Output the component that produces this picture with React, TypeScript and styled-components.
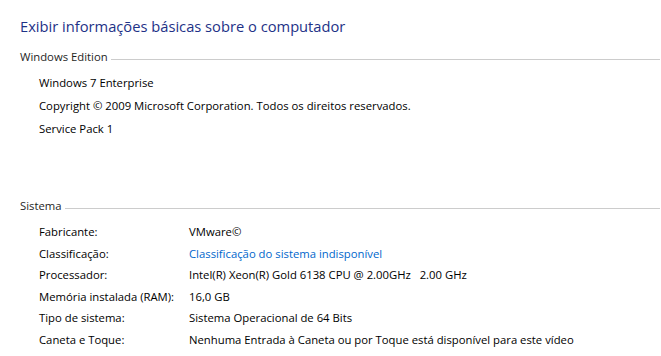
import React from "react";
import styled, { createGlobalStyle } from "styled-components";

const Global = createGlobalStyle`
  html, body { margin: 0; padding: 0; background: #ffffff; }
  body { font-family: "Open Sans", "Noto Sans", sans-serif; color: #000; }
`;

const Page = styled.div`
  width: 661px;
  height: 356px;
  overflow: hidden;
  background: #fff;
  padding: 15px 1px 0 20px;
  box-sizing: border-box;
`;

const Title = styled.h1`
  margin: 0;
  font-family: "Open Sans", sans-serif;
  font-weight: 400;
  font-size: 14.7px;
  line-height: 22px;
  color: #1e3287;
  white-space: nowrap;
`;

const Section = styled.section<{ $top: number }>`
  margin-top: ${(p) => p.$top}px;
`;

const Header = styled.div`
  display: flex;
  align-items: flex-start;
  font-size: 11.3px;
  line-height: 16px;
  color: #1e1e1e;
  white-space: nowrap;
  &::after {
    content: "";
    flex: 1;
    height: 1px;
    background: #cccccc;
    margin: 9.5px 0 0 3px;
  }
`;

const Rows = styled.div<{ $row: number; $gap: number }>`
  display: grid;
  grid-template-columns: 150px auto;
  grid-auto-rows: ${(p) => p.$row}px;
  padding-left: 19px;
  margin-top: ${(p) => p.$gap}px;
  font-size: 11.3px;
  line-height: ${(p) => p.$row}px;
  white-space: nowrap;
`;

const Line = styled.div`
  grid-column: 1 / -1;
`;

const Label = styled.div``;

const Value = styled.div<{ $link?: boolean }>`
  color: ${(p) => (p.$link ? "#0066cc" : "#000")};
`;

const edition = [
  "Windows 7 Enterprise",
  "Copyright © 2009 Microsoft Corporation. Todos os direitos reservados.",
  "Service Pack 1",
];

const system: { label: string; value: string; link?: boolean }[] = [
  { label: "Fabricante:", value: "VMware©" },
  { label: "Classificação:", value: "Classificação do sistema indisponível", link: true },
  { label: "Processador:", value: "Intel(R) Xeon(R) Gold 6138 CPU @ 2.00GHz\u00a0\u00a0\u00a02.00 GHz" },
  { label: "Memória instalada (RAM):", value: "16,0 GB" },
  { label: "Tipo de sistema:", value: "Sistema Operacional de 64 Bits" },
  { label: "Caneta e Toque:", value: "Nenhuma Entrada à Caneta ou por Toque está disponível para este vídeo" },
];

export default function App() {
  return (
    <>
      <Global />
      <Page>
        <Title>Exibir informações básicas sobre o computador</Title>
        <Section $top={12}>
          <Header>Windows Edition</Header>
          <Rows $row={23} $gap={6}>
            {edition.map((t) => (
              <Line key={t}>{t}</Line>
            ))}
          </Rows>
        </Section>
        <Section $top={58}>
          <Header>Sistema</Header>
          <Rows $row={21.6} $gap={7}>
            {system.map((r) => (
              <React.Fragment key={r.label}>
                <Label>{r.label}</Label>
                <Value $link={r.link}>{r.value}</Value>
              </React.Fragment>
            ))}
          </Rows>
        </Section>
      </Page>
    </>
  );
}
